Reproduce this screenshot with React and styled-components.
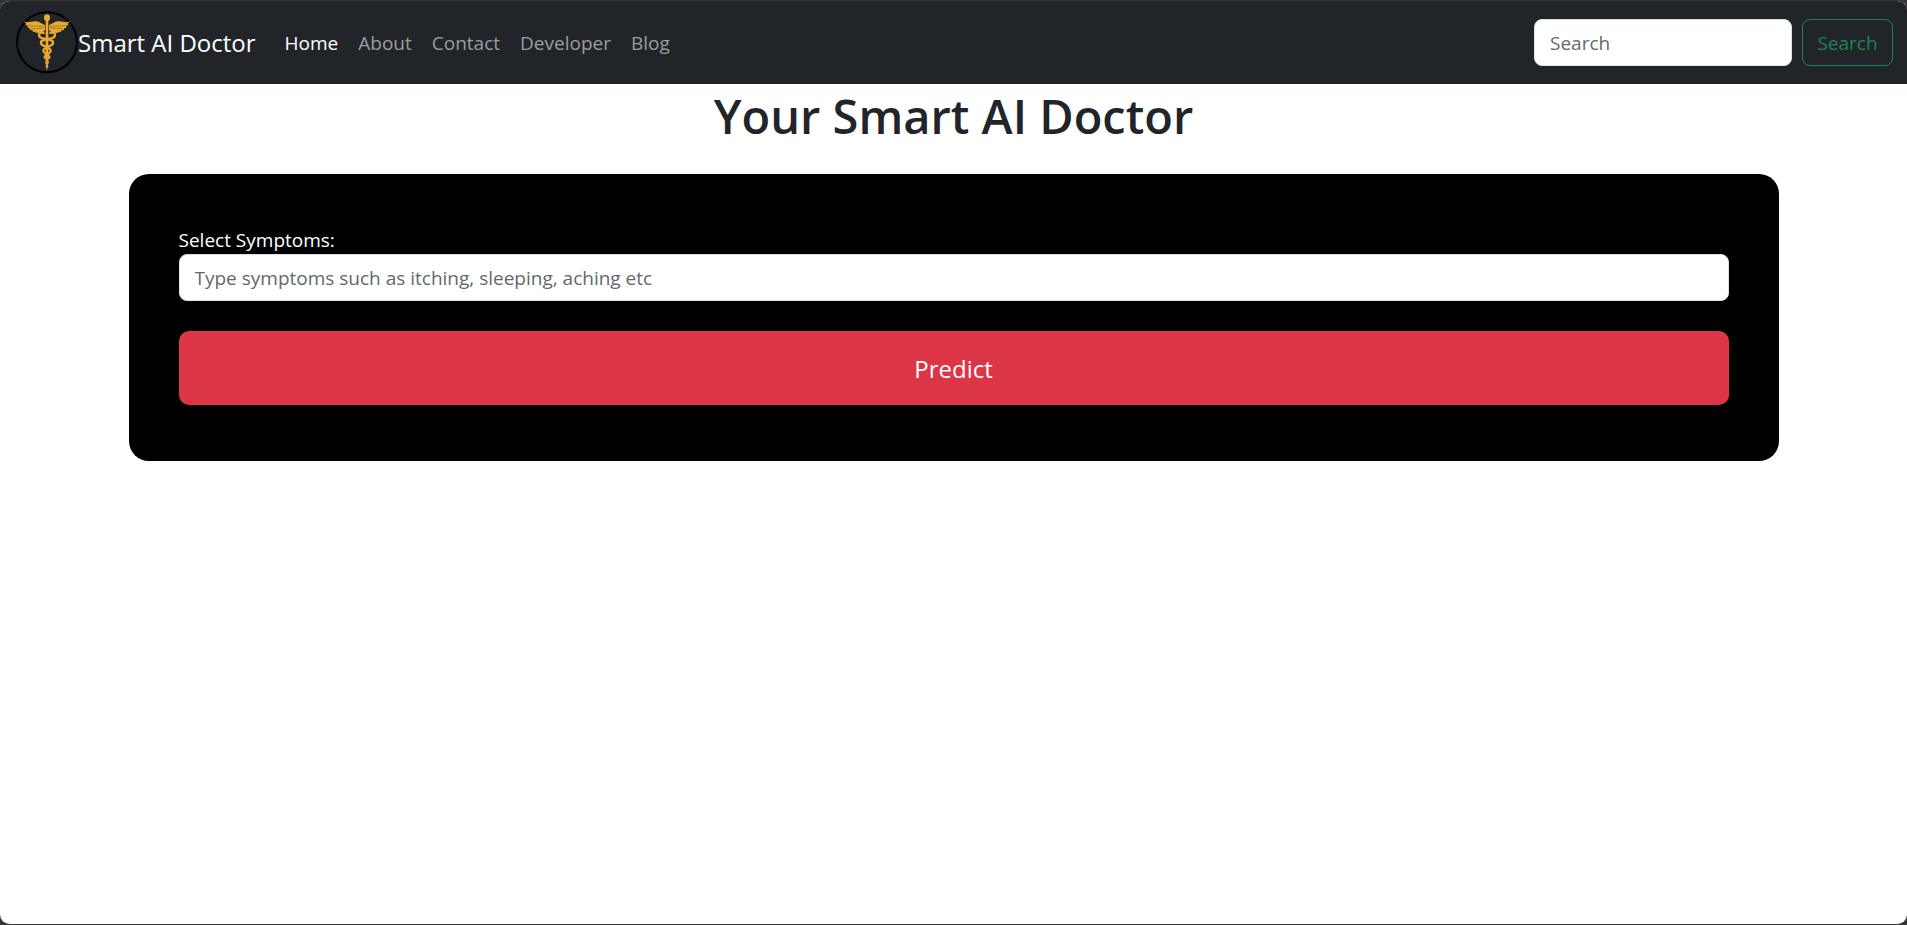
import React from "react";
import styled, { createGlobalStyle } from "styled-components";

const GlobalStyle = createGlobalStyle`
  *, *::before, *::after { box-sizing: border-box; }
  body {
    margin: 0;
    background: #333537;
    color: #212529;
    font-family: "Open Sans", "Noto Sans", sans-serif;
    font-size: 19px;
    line-height: 30px;
  }
`;

const Page = styled.div`
  min-height: 100vh;
  overflow: hidden;
  border: solid #333537;
  border-width: 1px 0;
  border-radius: 10px;
  background: #fff;
`;

const Navbar = styled.nav`
  display: flex;
  align-items: center;
  flex-wrap: wrap;
  padding: 10px 14px 10px 16px;
  background: #212529;
`;

const Brand = styled.a`
  display: flex;
  align-items: center;
  margin-right: 19px;
  color: #fff;
  font-size: 24px;
  line-height: 32px;
  text-decoration: none;
`;

const Logo = styled.svg`
  width: 62px;
  height: 63px;
`;

const NavList = styled.ul`
  display: flex;
  flex: 1;
  margin: 0;
  padding: 0;
  list-style: none;
`;

const NavLink = styled.a`
  display: block;
  padding: 10px;
  color: ${(p) => (p.$active ? "#fff" : "#9b9d9e")};
  text-decoration: none;
`;

const SearchForm = styled.form`
  display: flex;
  gap: 10px;
`;

const TextInput = styled.input`
  width: ${(p) => p.$width || "100%"};
  height: 47px;
  padding: 0 15px;
  border: 1px solid #dee2e6;
  border-radius: 8px;
  background: #fff;
  color: #212529;
  font: inherit;

  &::placeholder {
    color: #64686c;
    opacity: 1;
  }
`;

const SearchButton = styled.button`
  width: 91px;
  height: 47px;
  padding: 0;
  border: 1px solid #198754;
  border-radius: 8px;
  background: transparent;
  color: #198754;
  font: inherit;
`;

const Title = styled.h1`
  margin: 0 0 26px;
  font-size: 47px;
  font-weight: 600;
  line-height: 64px;
  text-align: center;
`;

const Card = styled.main`
  width: calc(100% - 30px);
  max-width: 1650px;
  margin: 0 auto;
  padding: 50px 50px 56px;
  border-radius: 20px;
  background: #000;
`;

const SymptomForm = styled.form`
  display: flex;
  flex-direction: column;
`;

const Label = styled.label`
  padding-top: 2px;
  color: #fff;
  line-height: 28px;
`;

const PredictButton = styled.button`
  height: 74px;
  margin-top: 30px;
  padding: 2px 0 0;
  border: 0;
  border-radius: 10px;
  background: #dc3545;
  color: #fff;
  font: inherit;
  font-size: 24px;
`;

const links = ["Home", "About", "Contact", "Developer", "Blog"];

function Caduceus() {
  return (
    <Logo viewBox="0 0 186 189" aria-hidden="true">
      <circle cx="93" cy="94" r="90" fill="none" stroke="#000" strokeWidth="6" />
      <g fill="#e9aa2f">
        <path d="M87 56C82 65 73 68 65 65L60 66L58 62L51 63L50 58L42 57L42 52L35 50L36 45L29 42L31 38L22 31C36 37 47 30 60 31C72 32 78 40 87 42Z" />
        <path d="M99 56C104 65 113 68 121 65L126 66L128 62L135 63L136 58L144 57L144 52L151 50L150 45L157 42L155 38L164 31C150 37 139 30 126 31C114 32 108 40 99 42Z" />
        <ellipse cx="93" cy="20" rx="9" ry="10" />
        <path d="M89 26H97V122L94 177H92L89 122Z" />
      </g>
      <g fill="none" stroke="#212529" strokeWidth="1">
        <path d="M37 43C52 47 66 44 84 46M45 52C58 55 70 52 84 50M149 43C134 47 120 44 102 46M141 52C128 55 116 52 102 50" />
      </g>
      <g fill="none" stroke="#e9aa2f" strokeLinecap="round">
        <path d="M83 66C65 61 65 79 80 82C99 86 114 88 111 97C108 108 81 106 82 120C83 130 101 130 100 139" strokeWidth="7" />
        <path d="M103 66C121 61 121 79 106 82C87 86 72 88 75 97C78 108 105 106 104 120C103 130 85 130 86 139" strokeWidth="7" />
        <path d="M100 139C99 147 88 147 89 154C90 160 97 160 95 168M86 139C87 147 98 147 97 154C96 160 89 160 91 168" strokeWidth="4" />
      </g>
    </Logo>
  );
}

export default function App() {
  return (
    <>
      <GlobalStyle />
      <Page>
        <Navbar>
          <Brand href="#">
            <Caduceus />
            Smart AI Doctor
          </Brand>
          <NavList>
            {links.map((name, i) => (
              <li key={name}>
                <NavLink href="#" $active={i === 0}>{name}</NavLink>
              </li>
            ))}
          </NavList>
          <SearchForm role="search">
            <TextInput type="search" placeholder="Search" aria-label="Search" $width="258px" />
            <SearchButton type="button">Search</SearchButton>
          </SearchForm>
        </Navbar>
        <Title>Your Smart AI Doctor</Title>
        <Card>
          <SymptomForm>
            <Label htmlFor="symptoms">Select Symptoms:</Label>
            <TextInput
              id="symptoms"
              type="text"
              placeholder="Type symptoms such as itching, sleeping, aching etc"
            />
            <PredictButton type="button">Predict</PredictButton>
          </SymptomForm>
        </Card>
      </Page>
    </>
  );
}
